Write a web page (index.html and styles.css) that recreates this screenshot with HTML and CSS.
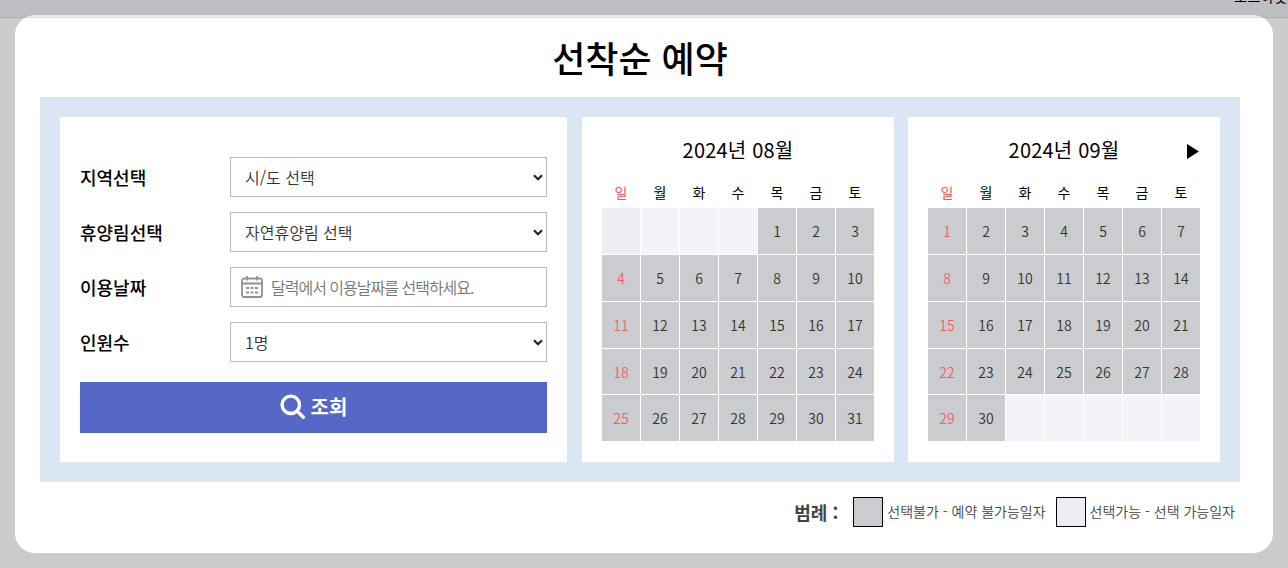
FILE: index.html
```html
<!DOCTYPE html>
<html lang="ko">
<head>
<meta charset="utf-8">
<title>선착순 예약</title>
<link rel="stylesheet" href="styles.css">
</head>
<body>
<div class="topbar"><span class="logout">로그아웃</span></div>
<main class="modal">
  <h1 class="title">선착순 예약</h1>
  <div class="board">
    <form class="panel search">
      <div class="row"><label class="label" for="region">지역선택</label>
        <div class="field"><select class="control" id="region"><option>시/도 선택</option></select><svg class="chevron" viewBox="0 0 10 7"><path d="M1 1.2 5 5.2 9 1.2"/></svg></div></div>
      <div class="row"><label class="label" for="forest">휴양림선택</label>
        <div class="field"><select class="control" id="forest"><option>자연휴양림 선택</option></select><svg class="chevron" viewBox="0 0 10 7"><path d="M1 1.2 5 5.2 9 1.2"/></svg></div></div>
      <div class="row"><label class="label" for="date">이용날짜</label>
        <div class="field date"><svg class="cal-icon" viewBox="0 0 24 24"><rect x="2" y="3.5" width="20" height="18.5" rx="2"/><path d="M2 8.5H22M7 1V5.5M17 1V5.5"/><path class="dots" d="M6 13H9M10.5 13H13.5M15 13H18M6 17.5H9M10.5 17.5H13.5M15 17.5H18"/></svg><input class="control date-input" id="date" placeholder="달력에서 이용날짜를 선택하세요."></div></div>
      <div class="row"><label class="label" for="people">인원수</label>
        <div class="field"><select class="control" id="people"><option>1명</option></select><svg class="chevron" viewBox="0 0 10 7"><path d="M1 1.2 5 5.2 9 1.2"/></svg></div></div>
      <button class="submit" type="button"><svg class="lens" viewBox="0 0 26 26"><circle cx="10.8" cy="10.8" r="8.7"/><path d="M17.4 17.4 23.4 23.2"/></svg><span>조회</span></button>
    </form>
    <section class="panel calendar">
      <h2 class="month">2024년 08월</h2>
      <div class="weekdays"><span>일</span><span>월</span><span>화</span><span>수</span><span>목</span><span>금</span><span>토</span></div>
      <div class="days">
        <span class="open"></span><span class="empty"></span><span class="empty"></span><span class="empty"></span><span>1</span><span>2</span><span>3</span>
        <span>4</span><span>5</span><span>6</span><span>7</span><span>8</span><span>9</span><span>10</span>
        <span>11</span><span>12</span><span>13</span><span>14</span><span>15</span><span>16</span><span>17</span>
        <span>18</span><span>19</span><span>20</span><span>21</span><span>22</span><span>23</span><span>24</span>
        <span>25</span><span>26</span><span>27</span><span>28</span><span>29</span><span>30</span><span>31</span>
      </div>
    </section>
    <section class="panel calendar">
      <h2 class="month">2024년 09월</h2>
      <svg class="next" viewBox="0 0 12 15"><path d="M0 0 12 7.5 0 15Z"/></svg>
      <div class="weekdays"><span>일</span><span>월</span><span>화</span><span>수</span><span>목</span><span>금</span><span>토</span></div>
      <div class="days">
        <span>1</span><span>2</span><span>3</span><span>4</span><span>5</span><span>6</span><span>7</span>
        <span>8</span><span>9</span><span>10</span><span>11</span><span>12</span><span>13</span><span>14</span>
        <span>15</span><span>16</span><span>17</span><span>18</span><span>19</span><span>20</span><span>21</span>
        <span>22</span><span>23</span><span>24</span><span>25</span><span>26</span><span>27</span><span>28</span>
        <span>29</span><span>30</span><span class="empty"></span><span class="empty"></span><span class="empty"></span><span class="empty"></span><span class="empty"></span>
      </div>
    </section>
  </div>
  <div class="legend">
    <strong class="legend-title">범례 :</strong>
    <i class="swatch"></i><span class="legend-text first">선택불가 - 예약 불가능일자</span>
    <i class="swatch available"></i><span class="legend-text">선택가능 - 선택 가능일자</span>
  </div>
</main>
</body>
</html>
```

FILE: styles.css
```css
* { box-sizing: border-box; }
body {
  margin: 0;
  height: 568px;
  overflow: hidden;
  background: #cbcbcb;
  color: #000;
  font-family: "Noto Sans CJK KR", sans-serif;
}
.topbar {
  display: flex;
  justify-content: flex-end;
  height: 18px;
  background: #bdbec2;
  border-bottom: 1px solid #acacac;
}
.logout {
  margin-top: -14px;
  font-size: 14px;
  line-height: 20px;
  letter-spacing: .6px;
  font-weight: 400;
  white-space: nowrap;
}
.modal {
  width: 1258px;
  height: 538px;
  margin: -3px 0 0 15px;
  padding: 15px 33px 0 25px;
  border-radius: 20px;
  background: linear-gradient(#ececee 0 2px, #dcdcde 2px 3px, #fff 3px);
}
.title {
  margin: 0;
  height: 67px;
  font-size: 36px;
  line-height: 54px;
  font-weight: 500;
  text-align: center;
}
.board {
  display: flex;
  height: 385px;
  padding: 20px;
  background: #dbe6f4;
}
.panel { background: #fff; }
.search {
  display: flex;
  flex-direction: column;
  gap: 15px;
  width: 507px;
  padding: 40px 20px 0;
}
.row { display: flex; height: 40px; }
.label {
  width: 150px;
  font-size: 18px;
  line-height: 40px;
  font-weight: 500;
}
.field { position: relative; width: 317px; }
.control {
  width: 100%;
  height: 40px;
  padding: 0 14px;
  border: 1px solid #b9b9b9;
  border-radius: 0;
  outline: 0;
  appearance: none;
  background: #fff;
  color: #333;
  font: 350 16px/38px "Noto Sans CJK KR", sans-serif;
}
.date-input { padding-left: 40px; letter-spacing: -1px; }
.date-input::placeholder { color: #757575; }
.chevron {
  position: absolute;
  right: 4px;
  top: 17px;
  width: 10px;
  height: 7px;
  fill: none;
  stroke: #222;
  stroke-width: 2.2;
}
.cal-icon {
  position: absolute;
  left: 10px;
  top: 8px;
  width: 24px;
  height: 24px;
  fill: none;
  stroke: #929292;
  stroke-width: 1.8;
}
.submit {
  display: flex;
  justify-content: center;
  align-items: center;
  gap: 5px;
  height: 51px;
  margin-top: 5px;
  padding: 0 0 1px;
  border: 0;
  background: #5567c7;
  color: #fff;
  font: 700 20px/30px "Noto Sans CJK KR", sans-serif;
}
.lens {
  width: 26px;
  height: 26px;
  fill: none;
  stroke: #fff;
  stroke-width: 3.4;
  stroke-linecap: round;
}
.calendar {
  position: relative;
  width: 312px;
  margin-left: 15px;
  padding: 18px 20px 0;
}
.calendar + .calendar { margin-left: 14px; }
.month {
  margin: 0;
  height: 43px;
  font-size: 20px;
  line-height: 30px;
  letter-spacing: .2px;
  font-weight: 400;
  text-align: center;
}
.next { position: absolute; left: 279px; top: 27px; width: 12px; height: 15px; }
.weekdays, .days {
  display: grid;
  grid-template-columns: repeat(7, 38px);
  column-gap: 1px;
  text-align: center;
}
.weekdays {
  height: 30px;
  font-size: 14px;
  line-height: 28px;
}
.weekdays span:first-child { color: #e95b61; }
.days {
  grid-template-rows: 46px 46px 46px 45px 46px;
  row-gap: 1px;
  color: #333;
  font-size: 14px;
  line-height: 46px;
  font-weight: 350;
}
.days span { background: #cbccd0; }
.days span:nth-child(7n+1) { color: #f35e64; }
.days .open { background: #edeef4; }
.days .empty { background: #f3f4fa; }
.legend {
  display: flex;
  align-items: center;
  justify-content: flex-end;
  height: 30px;
  margin-top: 15px;
  padding-right: 5px;
  color: #444;
}
.legend-title { margin-right: 15px; font-size: 18px; }
.swatch {
  width: 30px;
  height: 30px;
  margin-right: 4px;
  border: 1px solid #000;
  background: #cbccd0;
}
.available { background: #edeef4; }
.legend-text { padding-bottom: 2px; font-size: 14px; font-weight: 350; line-height: 28px; }
.first { margin-right: 10px; }
```
